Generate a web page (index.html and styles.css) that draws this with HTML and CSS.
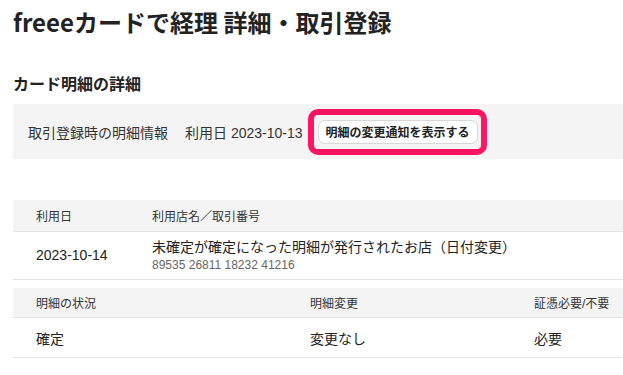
FILE: index.html
```html
<!DOCTYPE html>
<html lang="ja">
<head>
  <meta charset="UTF-8" />
  <meta name="viewport" content="width=device-width, initial-scale=1.0" />
  <title>freeeカードで経理 詳細・取引登録</title>
  <link rel="stylesheet" href="styles.css">
</head>
<body>
  <div class="page">
    <h1>freeeカードで経理 詳細・取引登録</h1>
    <h2>カード明細の詳細</h2>

    <div class="info">
      <span class="info-label">取引登録時の明細情報</span>
      <span class="info-date">利用日 2023-10-13</span>
      <span class="highlight">
        <button class="notice-btn">明細の変更通知を表示する</button>
      </span>
    </div>

    <table class="detail detail-main">
      <thead>
        <tr>
          <th class="col-date">利用日</th>
          <th>利用店名／取引番号</th>
        </tr>
      </thead>
      <tbody>
        <tr>
          <td class="col-date">2023-10-14</td>
          <td>
            <div class="shop">未確定が確定になった明細が発行されたお店（日付変更）</div>
            <div class="txn-no">89535 26811 18232 41216</div>
          </td>
        </tr>
      </tbody>
    </table>

    <table class="detail detail-status">
      <thead>
        <tr>
          <th class="col-status">明細の状況</th>
          <th class="col-change">明細変更</th>
          <th>証憑必要/不要</th>
        </tr>
      </thead>
      <tbody>
        <tr>
          <td class="col-status">確定</td>
          <td class="col-change">変更なし</td>
          <td>必要</td>
        </tr>
      </tbody>
    </table>
  </div>
</body>
</html>
```

FILE: styles.css
```css
* { box-sizing: border-box; }
body {
  margin: 0;
  background: #fff;
  color: #222;
  font-family: "Liberation Sans", "Noto Sans CJK JP", sans-serif;
  overflow: hidden;
}
.page { padding-left: 13px; }

h1 {
  margin: 6px 0 0;
  font-family: "Noto Sans CJK JP", sans-serif;
  font-size: 24px;
  line-height: 32px;
  font-weight: bold;
  color: #222;
}
h2 {
  margin: 33px 0 9px;
  font-family: "Noto Sans CJK JP", sans-serif;
  font-size: 16px;
  line-height: 24px;
  font-weight: bold;
  color: #222;
}

.info {
  display: flex;
  align-items: center;
  height: 55px;
  padding-left: 15px;
  background: #f5f4f4;
  font-size: 14px;
  color: #333;
}
.info-date { margin-left: 17px; }
.highlight {
  display: inline-flex;
  margin-left: 5px;
  padding: 5px 3px 5px 4px;
  border: 6px solid #ff1464;
  border-radius: 10px;
}
.notice-btn {
  height: 24px;
  padding: 0 7px;
  background: #fff;
  border: 1px solid #d9d7d7;
  border-radius: 7px;
  font-family: "Noto Sans CJK JP", sans-serif;
  font-size: 12px;
  font-weight: bold;
  color: #222;
  cursor: pointer;
}

.detail {
  width: 100%;
  border-collapse: collapse;
}
.detail th {
  height: 31px;
  padding: 0 0 0 23px;
  background: #f5f4f4;
  border-bottom: 1px solid #e4e2e2;
  text-align: left;
  font-size: 12px;
  font-weight: normal;
  color: #333;
}
.detail td {
  padding: 5px 0 6px 23px;
  border-bottom: 1px solid #e4e2e2;
  font-size: 14px;
  color: #222;
}
.detail-main { margin-top: 41px; }
.detail-main .col-date { width: 116px; }
.shop { line-height: 20px; }
.txn-no {
  font-size: 12px;
  line-height: 16px;
  color: #666;
}

.detail-status { margin-top: 8px; }
.detail-status th { height: 30px; }
.detail-status td { height: 40px; padding-top: 0; padding-bottom: 0; }
.detail-status .col-status { width: 274px; }
.detail-status .col-change { width: 224px; }
```
